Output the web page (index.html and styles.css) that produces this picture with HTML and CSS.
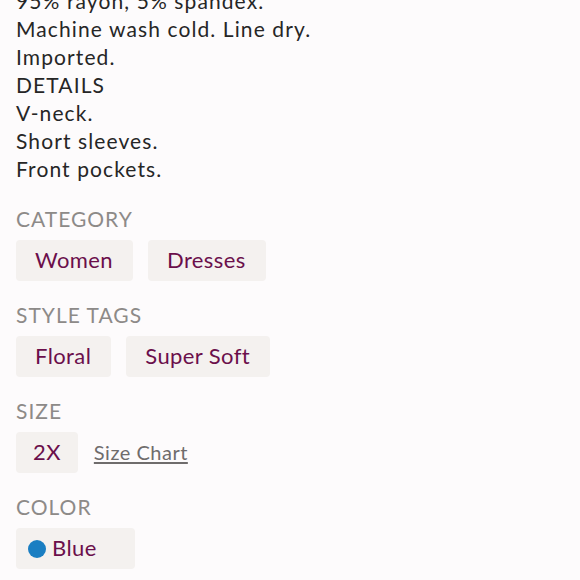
FILE: index.html
```html
<!DOCTYPE html>
<html lang="en">
<head>
<meta charset="utf-8">
<title>Listing details</title>
<link rel="stylesheet" href="styles.css">
</head>
<body>
<main class="page">
  <div class="description">
    <div>95% rayon, 5% spandex.</div>
    <div>Machine wash cold. Line dry.</div>
    <div>Imported.</div>
    <div>DETAILS</div>
    <div>V-neck.</div>
    <div>Short sleeves.</div>
    <div>Front pockets.</div>
  </div>

  <section class="section">
    <h3 class="label">CATEGORY</h3>
    <div class="chips">
      <span class="chip">Women</span>
      <span class="chip">Dresses</span>
    </div>
  </section>

  <section class="section">
    <h3 class="label">STYLE TAGS</h3>
    <div class="chips">
      <span class="chip">Floral</span>
      <span class="chip">Super Soft</span>
    </div>
  </section>

  <section class="section">
    <h3 class="label">SIZE</h3>
    <div class="chips">
      <span class="chip chip-size">2X</span>
      <a class="size-chart" href="#">Size Chart</a>
    </div>
  </section>

  <section class="section">
    <h3 class="label">COLOR</h3>
    <div class="chips">
      <span class="chip chip-color"><span class="dot"></span>Blue</span>
    </div>
  </section>
</main>
</body>
</html>
```
FILE: styles.css
```css
html, body {
  margin: 0;
  padding: 0;
  background: #fdfbfc;
}

body {
  font-family: Lato, "Noto Sans", sans-serif;
  color: #262626;
  overflow: hidden;
  height: 580px;
}

.page {
  padding: 0 16px;
}

.description {
  margin-top: -13px;
  font-size: 21px;
  line-height: 28px;
  letter-spacing: 1.1px;
}

.section {
  margin-top: 24px;
}

.section + .section {
  margin-top: 22px;
}

.label {
  margin: 0 0 9px;
  font-size: 21px;
  line-height: 24px;
  font-weight: 400;
  letter-spacing: 1px;
  color: #8d8a88;
}

.chips {
  display: flex;
  align-items: center;
  gap: 15px;
}

.chip {
  display: inline-flex;
  align-items: center;
  box-sizing: border-box;
  height: 41px;
  padding: 0 20px 2px 19px;
  background: #f4f1ef;
  border-radius: 4px;
  font-size: 22px;
  letter-spacing: 0.4px;
  color: #6b0f4b;
}

.chip-size {
  padding: 0 17px 2px 17px;
}

.chip-color {
  padding: 0 38px 2px 12px;
  gap: 6px;
}

.dot {
  width: 18px;
  height: 18px;
  margin-top: 2px;
  border-radius: 50%;
  background: #1a7ec2;
}

.size-chart {
  margin-left: 1px;
  margin-top: -2px;
  font-size: 20px;
  letter-spacing: 0.5px;
  color: #6f6c6c;
  text-decoration: underline;
  text-underline-offset: 2px;
}
```
